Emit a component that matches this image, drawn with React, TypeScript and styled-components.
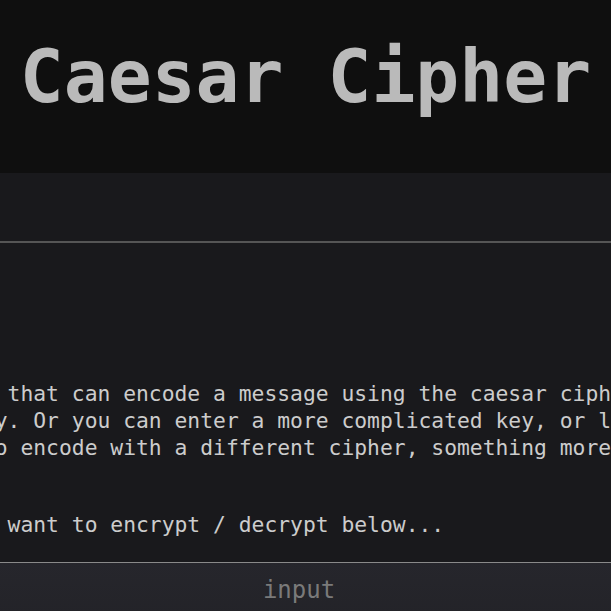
import React from "react";
import styled, { createGlobalStyle } from "styled-components";

const GlobalStyle = createGlobalStyle`
  html, body {
    margin: 0;
    padding: 0;
    background: #19191c;
    overflow: hidden;
  }
  body {
    font-family: "DejaVu Sans Mono", "Liberation Mono", monospace;
    color: #cccccc;
  }
`;

const Page = styled.div`
  display: flex;
  flex-direction: column;
  width: 611px;
  min-height: 611px;
`;

const Header = styled.header`
  height: 173px;
  background: #0f0f0f;
  display: flex;
  align-items: center;
  justify-content: center;
`;

const Title = styled.h1`
  margin: 0;
  padding-bottom: 20px;
  font-family: "DejaVu Sans Mono", monospace;
  font-weight: bold;
  font-size: 73px;
  line-height: 1;
  color: #bababa;
  white-space: nowrap;
`;

const NavBand = styled.nav`
  height: 68px;
  background: #19191c;
  border-bottom: 2px solid #555555;
`;

const Main = styled.main`
  display: flex;
  flex-direction: column;
  align-items: center;
  padding-top: 137px;
  padding-bottom: 24px;
  background: #19191c;
`;

const Content = styled.section`
  width: 904px;
  flex-shrink: 0;
  display: flex;
  flex-direction: column;
  gap: 50px;
`;

const Paragraph = styled.p`
  margin: 0;
  font-size: 21.33px;
  line-height: 27px;
  color: #cccccc;
`;

const Line = styled.span`
  display: block;
  white-space: pre;
`;

const InputArea = styled.textarea`
  display: block;
  box-sizing: border-box;
  width: 100%;
  height: 120px;
  margin: 0;
  padding: 12px 13px 0 0;
  border: none;
  border-top: 1px solid #8a8a8a;
  outline: none;
  resize: none;
  background: linear-gradient(#26262c, #202024);
  color: #cccccc;
  font-family: "DejaVu Sans Mono", monospace;
  font-size: 24px;
  line-height: 30px;
  text-align: center;
  &::placeholder {
    color: #7a7a7a;
  }
`;

export default function App() {
  return (
    <>
      <GlobalStyle />
      <Page>
        <Header>
          <Title>Caesar Cipher</Title>
        </Header>
        <NavBand />
        <Main>
          <Content>
            <Paragraph>
              <Line>A small app that can encode a message using the caesar cipher</Line>
              <Line>with any key. Or you can enter a more complicated key, or leave it</Line>
              <Line>or choose to encode with a different cipher, something more secure.</Line>
            </Paragraph>
            <Paragraph>
              <Line>Put all you want to encrypt / decrypt below...</Line>
            </Paragraph>
          </Content>
        </Main>
        <InputArea placeholder="input" />
      </Page>
    </>
  );
}
